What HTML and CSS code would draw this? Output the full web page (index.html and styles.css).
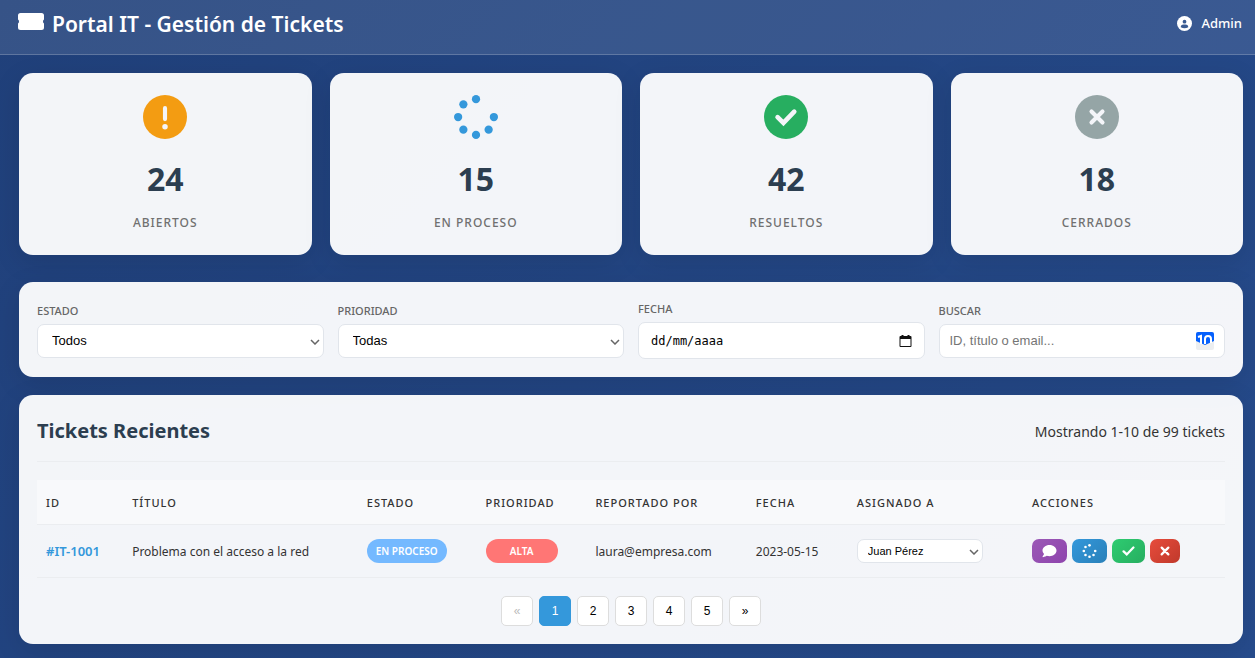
FILE: index.html
```html
<!DOCTYPE html>
<html lang="es">
<head>
<meta charset="utf-8">
<meta name="viewport" content="width=device-width, initial-scale=1">
<title>Portal IT - Gestión de Tickets</title>
<link rel="stylesheet" href="styles.css">
</head>
<body>
<svg class="sprite" aria-hidden="true">
  <symbol id="i-ticket" viewBox="0 0 52 34"><path d="M5 0h42q5 0 5 5v8q-2 1-2 4t2 4v8q0 5-5 5H5q-5 0-5-5v-8q2-1 2-4t-2-4V5q0-5 5-5z"/></symbol>
  <symbol id="i-spinner" viewBox="0 0 512 512"><circle cx="256" cy="48" r="48"/><circle cx="256" cy="464" r="48"/><circle cx="48" cy="256" r="48"/><circle cx="464" cy="256" r="48"/><circle cx="109" cy="109" r="48"/><circle cx="109" cy="403" r="48"/><circle cx="403" cy="403" r="48"/></symbol>
  <symbol id="i-check" viewBox="0 0 448 512"><path d="M45 270l115 112L403 130" fill="none" stroke="currentColor" stroke-width="84" stroke-linecap="round"/></symbol>
  <symbol id="i-times" viewBox="0 0 384 512"><path d="M64 128l256 256M320 128L64 384" fill="none" stroke="currentColor" stroke-width="88" stroke-linecap="round"/></symbol>
  <symbol id="i-comment" viewBox="0 0 512 512"><path d="M512 240c0 114.900-114.600 208-256 208-37.100 0-72.300-6.400-104.100-17.900-11.900 8.700-31.300 20.600-54.300 30.600C73.600 471.100 44.700 480 16 480c-6.500 0-12.300-3.900-14.800-9.900s-1.100-12.800 3.400-17.400c8-8.800 18.300-22 28-39 9.400-16 18.500-37 20.300-60.500C19.600 320.700 0 282 0 240 0 125.100 114.600 32 256 32s256 93.100 256 208z"/></symbol>
  <symbol id="i-calendar" viewBox="0 0 12 12"><path fill-rule="evenodd" d="M2 0h2v1h4V0h2v1h1q1 0 1 1v9q0 1-1 1H1q-1 0-1-1V2q0-1 1-1h1zM1 4v7h10V4z"/></symbol>
  <symbol id="i-chevron" viewBox="0 0 10 6"><path d="M1 1l4 4 4-4" fill="none" stroke="currentColor" stroke-width="1.500"/></symbol>
</svg>

<header class="topbar">
  <h1 class="brand"><svg class="brand-icon" aria-hidden="true"><use href="#i-ticket"/></svg>Portal IT - Gestión de Tickets</h1>
  <div class="user">
    <svg class="user-icon" viewBox="0 0 16 16" aria-hidden="true"><circle cx="8" cy="8" r="8" fill="#fff"/><circle cx="8" cy="6" r="2" fill="#3a5b92"/><path fill="#3a5b92" d="M4 12c0-2 1-3 3-3h2c2 0 3 1 3 3q-2 1-4 1t-4-1z"/></svg>
    <span>Admin</span>
  </div>
</header>

<main class="container">
  <section class="stats">
    <article class="card stat">
      <svg class="stat-icon" viewBox="0 0 512 512" aria-hidden="true"><circle cx="256" cy="256" r="256" fill="#f39c12"/><path d="M256 152v128" stroke="#f4f5f9" stroke-width="48" stroke-linecap="round"/><circle cx="256" cy="368" r="32" fill="#f4f5f9"/></svg>
      <p class="stat-number">24</p>
      <p class="stat-label">Abiertos</p>
    </article>
    <article class="card stat">
      <svg class="stat-icon process" aria-hidden="true"><use href="#i-spinner"/></svg>
      <p class="stat-number">15</p>
      <p class="stat-label">En proceso</p>
    </article>
    <article class="card stat">
      <svg class="stat-icon" viewBox="0 0 512 512" aria-hidden="true"><circle cx="256" cy="256" r="256" fill="#27ae60"/><path d="M158 258l68 66 126-130" fill="none" stroke="#f4f5f9" stroke-width="54" stroke-linecap="round"/></svg>
      <p class="stat-number">42</p>
      <p class="stat-label">Resueltos</p>
    </article>
    <article class="card stat">
      <svg class="stat-icon" viewBox="0 0 512 512" aria-hidden="true"><circle cx="256" cy="256" r="256" fill="#95a5a6"/><path d="M192 192l128 128M320 192L192 320" stroke="#f4f5f9" stroke-width="48" stroke-linecap="round"/></svg>
      <p class="stat-number">18</p>
      <p class="stat-label">Cerrados</p>
    </article>
  </section>

  <form class="card filters">
    <div class="field">
      <label for="f-status">Estado</label>
      <div class="select-wrap">
        <select id="f-status" class="control"><option>Todos</option><option>Abierto</option><option>En proceso</option><option>Resuelto</option><option>Cerrado</option></select>
        <svg class="chevron" aria-hidden="true"><use href="#i-chevron"/></svg>
      </div>
    </div>
    <div class="field">
      <label for="f-priority">Prioridad</label>
      <div class="select-wrap">
        <select id="f-priority" class="control"><option>Todas</option><option>Alta</option><option>Media</option><option>Baja</option></select>
        <svg class="chevron" aria-hidden="true"><use href="#i-chevron"/></svg>
      </div>
    </div>
    <div class="field">
      <label for="f-date">Fecha</label>
      <div class="control date">
        <input id="f-date" type="text" placeholder="dd/mm/aaaa">
        <button type="button" class="date-button" aria-label="Abrir calendario"><svg aria-hidden="true"><use href="#i-calendar"/></svg></button>
      </div>
    </div>
    <div class="field">
      <label for="f-search">Buscar</label>
      <div class="control search">
        <input id="f-search" type="text" placeholder="ID, título o email...">
        <svg class="badge-ten" viewBox="0 0 18 18" aria-hidden="true"><rect width="18" height="18" rx="2" fill="#eceef0"/><path fill="#0560fd" d="M2 0h14q2 0 2 2v7l-9 4-9-4V2q0-2 2-2z"/><path d="M2 5l3-1v8M9 12V7q0-3 3-3t3 3v4" fill="none" stroke="#fff" stroke-width="2"/></svg>
      </div>
    </div>
  </form>

  <section class="card tickets">
    <div class="tickets-head">
      <h2>Tickets Recientes</h2>
      <span>Mostrando 1-10 de 99 tickets</span>
    </div>
    <table>
      <colgroup><col class="c-id"><col class="c-title"><col class="c-status"><col class="c-priority"><col class="c-reporter"><col class="c-date"><col class="c-assignee"><col></colgroup>
      <thead>
        <tr><th>ID</th><th>Título</th><th>Estado</th><th>Prioridad</th><th>Reportado por</th><th>Fecha</th><th>Asignado a</th><th>Acciones</th></tr>
      </thead>
      <tbody>
        <tr>
          <td><a class="ticket-id" href="#IT-1001">#IT-1001</a></td>
          <td>Problema con el acceso a la red</td>
          <td><span class="pill status">En proceso</span></td>
          <td><span class="pill high">Alta</span></td>
          <td>laura@empresa.com</td>
          <td>2023-05-15</td>
          <td>
            <div class="select-wrap assignee">
              <select class="control" aria-label="Asignado a"><option>Juan Pérez</option></select>
              <svg class="chevron" aria-hidden="true"><use href="#i-chevron"/></svg>
            </div>
          </td>
          <td>
            <div class="actions">
              <button type="button" class="act comment" aria-label="Comentar"><svg class="ico-l" aria-hidden="true"><use href="#i-comment"/></svg></button>
              <button type="button" class="act progress" aria-label="En proceso"><svg class="ico-l" aria-hidden="true"><use href="#i-spinner"/></svg></button>
              <button type="button" class="act resolve" aria-label="Resolver"><svg class="ico-m" aria-hidden="true"><use href="#i-check"/></svg></button>
              <button type="button" class="act close" aria-label="Cerrar"><svg class="ico-s" aria-hidden="true"><use href="#i-times"/></svg></button>
            </div>
          </td>
        </tr>
      </tbody>
    </table>
    <nav class="pages" aria-label="Paginación">
      <button type="button" disabled>«</button>
      <button type="button" class="current" aria-current="page">1</button>
      <button type="button">2</button>
      <button type="button">3</button>
      <button type="button">4</button>
      <button type="button">5</button>
      <button type="button">»</button>
    </nav>
  </section>
</main>
</body>
</html>
```

FILE: styles.css
```css
* { box-sizing: border-box; margin: 0; }

body {
  min-height: 100vh;
  background: linear-gradient(135deg, #20407a, #264b8c);
  color: #333;
  font-family: "Segoe UI", "Noto Sans", sans-serif;
  font-size: 12px;
}

.sprite { display: none; }
svg { fill: currentColor; flex: none; }
button, input, select { font-family: Arial, "Liberation Sans", sans-serif; }

.topbar {
  display: flex;
  justify-content: space-between;
  align-items: center;
  padding: 8px 13px 14px 18px;
  background: rgba(255, 255, 255, 0.1);
  border-bottom: 1px solid rgba(255, 255, 255, 0.2);
  color: #fff;
}
.brand {
  display: flex;
  gap: 8px;
  font-size: 21px;
  line-height: 32px;
  font-weight: 600;
}
.brand-icon { width: 26px; height: 17px; margin-top: 5px; }
.user { display: flex; align-items: center; gap: 9px; font-size: 13px; line-height: 18px; font-weight: 500; margin-bottom: 2px; }
.user-icon { width: 15px; height: 15px; }

.container {
  display: flex;
  flex-direction: column;
  padding: 18px 12px 14px 19px;
}
.card {
  background: rgba(255, 255, 255, 0.95);
  border-radius: 14px;
  box-shadow: 0 7px 28px rgba(0, 0, 0, 0.1);
}

.stats {
  display: grid;
  grid-template-columns: repeat(4, 1fr);
  gap: 18px;
  margin-bottom: 27px;
}
.stat {
  display: flex;
  flex-direction: column;
  align-items: center;
  padding: 22px 18px 23px;
}
.stat-icon { width: 44px; height: 44px; }
.process { color: #3498db; }
.stat-number {
  margin: 18px 0 13px;
  color: #2c3e50;
  font-size: 32px;
  line-height: 44px;
  font-weight: 700;
}
.stat-label {
  color: #707070;
  font-size: 12px;
  line-height: 18px;
  font-weight: 500;
  letter-spacing: 1px;
  text-transform: uppercase;
}

.filters {
  display: grid;
  grid-template-columns: repeat(4, 1fr);
  gap: 14px;
  align-items: center;
  padding: 18px;
  margin-bottom: 18px;
}
.field { display: flex; flex-direction: column; gap: 4px; }
.field label {
  color: #666;
  font-size: 11px;
  line-height: 18px;
  font-weight: 500;
  text-transform: uppercase;
}
.control {
  height: 34px;
  padding: 0 10px;
  background: #fff;
  border: 1px solid #e1e5eb;
  border-radius: 7px;
  color: #000;
  font-size: 13px;
}
.select-wrap { position: relative; display: flex; }
.select-wrap select { appearance: none; width: 100%; padding: 0 22px 0 14px; }
.chevron {
  position: absolute;
  right: 4px;
  top: calc(50% - 2px);
  width: 10px;
  height: 6px;
  color: #666;
  pointer-events: none;
}
.control input {
  flex: 1;
  min-width: 0;
  padding: 0;
  border: 0;
  outline: 0;
  background: none;
  font-size: 13px;
}
.date, .search { display: flex; align-items: center; }
.date { height: 37px; padding: 0 12px; }
.date input { font-family: "DejaVu Sans Mono", monospace; font-size: 12px; }
.date input::placeholder { color: #000; }
.date-button { display: flex; padding: 0; border: 0; background: none; color: #111; }
.date-button svg { width: 13px; height: 12px; }
.search input::placeholder { color: #757575; }
.badge-ten { width: 18px; height: 18px; }

.tickets { padding: 18px; }
.tickets-head {
  display: flex;
  justify-content: space-between;
  align-items: center;
  padding-bottom: 12px;
  margin-bottom: 18px;
  border-bottom: 1px solid #ebedf0;
}
.tickets-head h2 {
  color: #2c3e50;
  font-size: 20px;
  line-height: 36px;
  font-weight: 700;
}
.tickets-head span { font-size: 14px; }

table { width: 100%; table-layout: fixed; border-collapse: separate; border-spacing: 0; }
.c-id { width: 7.25%; }
.c-title { width: 19.75%; }
.c-status { width: 10%; }
.c-priority { width: 9.25%; }
.c-reporter { width: 13.5%; }
.c-date { width: 8.5%; }
.c-assignee { width: 14.75%; }
th, td {
  padding: 0 9px;
  border-bottom: 1px solid #ebedf0;
  text-align: left;
  white-space: nowrap;
}
th {
  height: 45px;
  background: #f8f9fb;
  font-size: 11px;
  font-weight: 500;
  letter-spacing: 1px;
  text-transform: uppercase;
}
td { height: 53px; font-size: 12px; }
.ticket-id { color: #3498db; font-size: 13px; font-weight: 600; text-decoration: none; }
.pill {
  display: inline-block;
  min-width: 72px;
  padding: 0 9px;
  border-radius: 12px;
  color: #fff;
  font-size: 10px;
  line-height: 24px;
  font-weight: 600;
  text-align: center;
  text-transform: uppercase;
  vertical-align: middle;
}
.status { background: #74b9ff; }
.high { background: #ff7675; }
.assignee { width: 126px; }
.assignee select { height: 24px; padding-left: 10px; font-size: 11px; }

.actions { display: flex; gap: 5px; }
.act {
  display: flex;
  align-items: center;
  height: 24px;
  padding: 0 10px;
  border: 0;
  border-radius: 7px;
  color: #fff;
}
.act svg { height: 14px; }
.ico-l { width: 15px; }
.ico-m { width: 13px; }
.ico-s { width: 10px; }
.comment { background: linear-gradient(135deg, #9b59b6, #8e44ad); }
.progress { background: linear-gradient(135deg, #3498db, #2980b9); }
.resolve { background: linear-gradient(135deg, #2ecc71, #27ae60); }
.close { background: linear-gradient(135deg, #e74c3c, #c0392b); }

.pages { display: flex; justify-content: center; gap: 6px; margin-top: 18px; }
.pages button {
  width: 32px;
  height: 30px;
  padding: 0;
  background: #fff;
  border: 1px solid #ddd;
  border-radius: 5px;
  color: #000;
  font-size: 12px;
}
.pages .current { background: #3498db; border-color: #3498db; color: #fff; }
.pages button:disabled { color: #bbb; }
```
